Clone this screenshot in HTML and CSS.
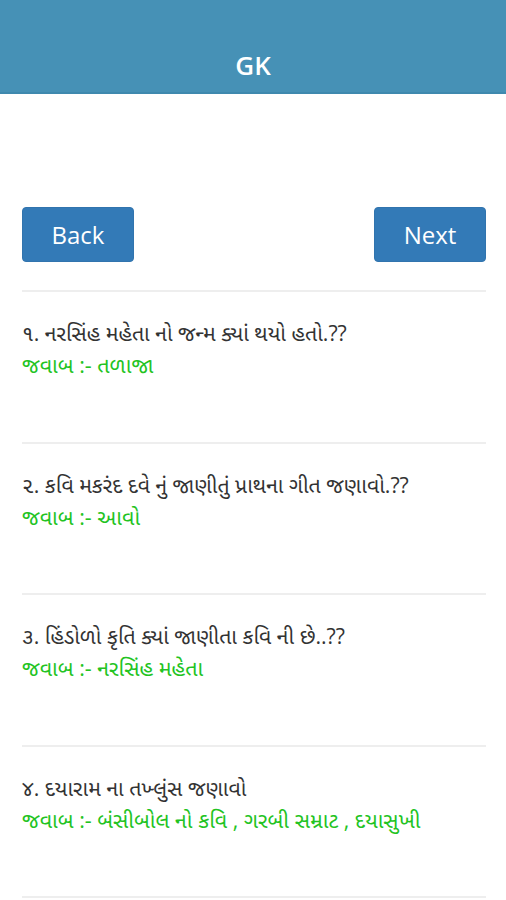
FILE: index.html
```html
<!doctype html>
<html>
<head>
	<meta charset="utf-8">
	<title>GK</title>
	<link rel="stylesheet" href="styles.css">
</head>
<body>
	<div class="header">
		<h1 class="title">GK</h1>
	</div>

	<div class="content">
		<div class="nav">
			<a class="btn" href="#">Back</a>
			<a class="btn" href="#">Next</a>
		</div>

		<hr class="line">
		<div class="qa">
			<p class="question">૧. નરસિંહ મહેતા નો જન્મ ક્યાં થયો હતો.??</p>
			<p class="answer">જવાબ :- તળાજા</p>
		</div>

		<hr class="line">
		<div class="qa">
			<p class="question">૨. કવિ મકરંદ દવે નું જાણીતું પ્રાથના ગીત જણાવો.??</p>
			<p class="answer">જવાબ :- આવો</p>
		</div>

		<hr class="line">
		<div class="qa">
			<p class="question">૩. હિંડોળો કૃતિ ક્યાં જાણીતા કવિ ની છે..??</p>
			<p class="answer">જવાબ :- નરસિંહ મહેતા</p>
		</div>

		<hr class="line">
		<div class="qa">
			<p class="question">૪. દયારામ ના તખ્લુંસ જણાવો</p>
			<p class="answer">જવાબ :- બંસીબોલ નો કવિ , ગરબી સમ્રાટ , દયાસુખી</p>
		</div>

		<hr class="line">
	</div>
</body>
</html>
```

FILE: styles.css
```css
* { margin: 0; padding: 0; box-sizing: border-box; }
body { background: #fff; font-family: "Open Sans", "Noto Sans Gujarati", "Noto Sans", sans-serif; color: #333; }

.header { height: 94px; background: #4691b6; border-bottom: 2px solid #3f89ae; padding-top: 40px; text-align: center; }
.title { color: #fff; font-size: 26px; font-weight: 600; line-height: 50px; }

.content { padding: 0 20px 0 22px; }

.nav { display: flex; justify-content: space-between; padding-top: 113px; }
.btn { display: block; width: 112px; height: 55px; line-height: 54px; text-align: center; background: #337ab7; border: 1px solid #3174ae; border-radius: 4px; color: #fff; font-size: 24px; text-decoration: none; }

.line { border: 0; border-top: 2px solid #eee; margin-top: 28px; }
.qa + .line { margin-top: 0; }

.qa { padding: 28px 0 63.5px; }
.question { font-size: 21.3px; line-height: 26px; color: #333; }
.answer { font-size: 21.5px; line-height: 26px; margin-top: 6px; color: #22c322; }
```
